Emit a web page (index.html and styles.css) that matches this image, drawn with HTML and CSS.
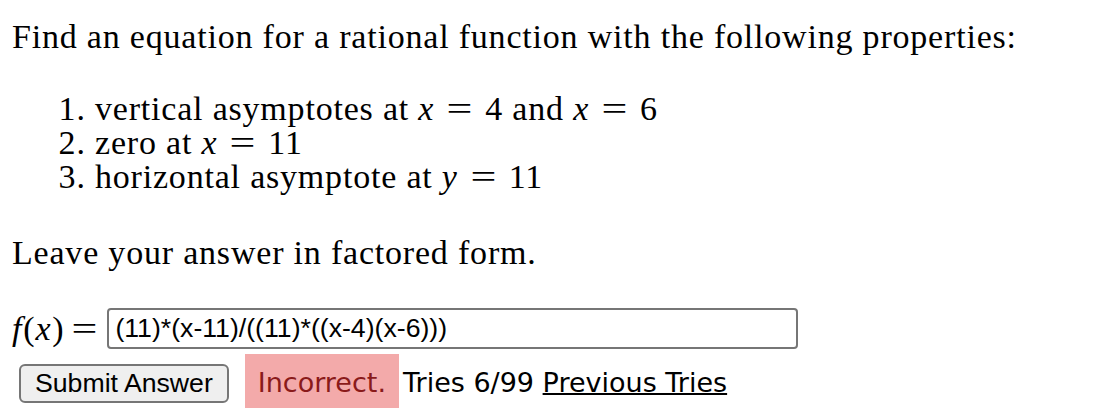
FILE: index.html
```html
<!DOCTYPE html>
<html lang="en">
<head>
  <meta charset="UTF-8" />
  <title>Rational Function Problem</title>
  <link rel="stylesheet" href="styles.css">
</head>
<body>
  <!-- Problem text -->
  <div class="problem">
    <p class="intro">Find an equation for a rational function with the following properties:</p>
    <ol class="props">
      <li>vertical asymptotes at <span class="m"><i>x</i><span class="rel">=</span>4</span> and <span class="m"><i>x</i><span class="rel">=</span>6</span></li>
      <li>zero at <span class="m"><i>x</i><span class="rel">=</span>11</span></li>
      <li>horizontal asymptote at <span class="m"><i>y</i><span class="rel">=</span>11</span></li>
    </ol>
    <p class="note">Leave your answer in factored form.</p>

    <div class="answer-row">
      <span class="m label"><i>f</i>(<i>x</i>)<span class="rel">=</span></span>
      <input class="answer" type="text" value="(11)*(x-11)/((11)*((x-4)(x-6)))">
    </div>
  </div>

  <!-- Submit + result -->
  <div class="submit-row">
    <button class="submit-btn">Submit Answer</button>
    <span class="result-bad">Incorrect.</span>
    <span class="tries">Tries 6/99 <a href="#">Previous Tries</a></span>
  </div>
</body>
</html>
```

FILE: styles.css
```css
/* ---------- Base ---------- */
html, body {
  margin: 0;
  padding: 0;
  background: #ffffff;
  color: #000000;
  overflow: hidden;
}
body {
  padding: 18px 12px 0;
  font-family: "Liberation Serif", "Times New Roman", serif;
  font-size: 34px;
  letter-spacing: 0.8px;
}

/* ---------- Problem text ---------- */
.intro {
  margin: 0;
  line-height: 38px;
}
.props {
  margin: 36px 0 0;
  padding-left: 83px;
  line-height: 34px;
}
.note {
  margin: 40px 0 0;
  line-height: 38px;
}

/* inline math */
.m i {
  font-style: italic;
  margin-right: 1px;
}
.rel {
  display: inline-block;
  margin: 0 12px;
  transform: scaleX(1.35);
  padding: 0 3px;
}

/* ---------- Answer row ---------- */
.answer-row {
  display: flex;
  align-items: center;
  margin-top: 36px;
}
.label {
  margin-right: 1px;
}
.label .rel {
  margin: 0 8px;
}
.answer {
  width: 691px;
  height: 41px;
  box-sizing: border-box;
  border: 2px solid #767676;
  border-radius: 4px;
  padding: 0 6px;
  font-family: "Liberation Sans", Arial, sans-serif;
  font-size: 26.67px;
  letter-spacing: 0;
  color: #000;
  background: #fff;
}

/* ---------- Submit row ---------- */
.submit-row {
  display: flex;
  align-items: baseline;
  margin-top: 5px;
  padding-left: 7px;
  letter-spacing: 0;
}
.submit-btn {
  font-family: "Liberation Sans", Arial, sans-serif;
  font-size: 26.67px;
  line-height: 31px;
  color: #000;
  background: #efefef;
  border: 2px solid #767676;
  border-radius: 6px;
  padding: 2px 14px;
}
.result-bad {
  margin-left: 16px;
  padding: 14px 13px 16px;
  line-height: 30px;
  background: #f3aaaa;
  color: #8a1a1a;
  font-family: "DejaVu Sans", Verdana, sans-serif;
  font-size: 27px;
}
.tries {
  margin-left: 4px;
  font-family: "DejaVu Sans", Verdana, sans-serif;
  font-size: 27px;
  line-height: 30px;
}
.tries a {
  color: #000;
  text-decoration: underline;
  text-decoration-thickness: 2px;
}
```
